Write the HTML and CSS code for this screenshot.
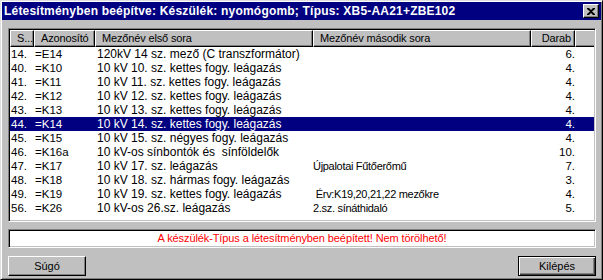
FILE: index.html
```html
<!DOCTYPE html>
<html lang="hu">
<head>
    <meta charset="UTF-8">
    <title>Létesítményben beépítve</title>
    <link rel="stylesheet" href="styles.css">
</head>
<body>

    <div class="window">
        <div class="titlebar">
            <span class="title">Létesítményben beépítve: Készülék: nyomógomb; Típus: XB5-AA21+ZBE102</span>
            <span class="close-btn">
                <svg width="8" height="7" viewBox="0 0 8 7"><path d="M0 0h2l2 2 2-2h2v1L5 3.5 8 6v1H6L4 5 2 7H0V6l3-2.5L0 1z" fill="#000"/></svg>
            </span>
        </div>

        <div class="content">
            <div class="listview">
                <div class="row head">
                    <div class="hcell">S...</div>
                    <div class="hcell">Azonosító</div>
                    <div class="hcell">Mezőnév első sora</div>
                    <div class="hcell">Mezőnév második sora</div>
                    <div class="hcell num">Darab</div>
                    <div class="hcell blank"></div>
                </div>
                <div id="rows"></div>
            </div>

            <div class="status">A készülék-Típus a létesítményben beépített! Nem törölhető!</div>

            <div class="buttons">
                <div class="btn">Súgó</div>
                <div class="btn default">Kilépés</div>
            </div>
        </div>
    </div>

    <script>
        // Sorok adatai
        const data = [
            ['14.', '=E14', '120kV 14 sz. mező (C transzformátor)', '', '6.'],
            ['40.', '=K10', '10 kV 10. sz. kettes fogy. leágazás', '', '4.'],
            ['41.', '=K11', '10 kV 11. sz. kettes fogy. leágazás', '', '4.'],
            ['42.', '=K12', '10 kV 12. sz. kettes fogy. leágazás', '', '4.'],
            ['43.', '=K13', '10 kV 13. sz. kettes fogy. leágazás', '', '4.'],
            ['44.', '=K14', '10 kV 14. sz. kettes fogy. leágazás', '', '4.'],
            ['45.', '=K15', '10 kV 15. sz. négyes fogy. leágazás', '', '4.'],
            ['46.', '=K16a', '10 kV-os sínbontók és  sínföldelők', '', '10.'],
            ['47.', '=K17', '10 kV 17. sz. leágazás', 'Újpalotai Fűtőerőmű', '7.'],
            ['48.', '=K18', '10 kV 18. sz. hármas fogy. leágazás', '', '3.'],
            ['49.', '=K19', '10 kV 19. sz. kettes fogy. leágazás', ' Érv:K19,20,21,22 mezőkre', '4.'],
            ['56.', '=K26', '10 kV-os 26.sz. leágazás', '2.sz. sínáthidaló', '5.']
        ];

        const rows = document.getElementById('rows');
        data.forEach((item, i) => {
            const row = document.createElement('div');
            row.classList.add('row');
            if (i === 5) row.classList.add('selected');
            row.innerHTML = item.map((v, j) =>
                `<div class="cell c${j + 1}">${v}</div>`
            ).join('');
            rows.appendChild(row);
        });
    </script>

</body>
</html>
```

FILE: styles.css
```css
body {
    margin: 0;
    padding: 0;
    font-family: "Liberation Sans", Arial, sans-serif;
    font-size: 11px;
    color: #000;
}

.window {
    width: 603px;
    height: 280px;
    box-sizing: border-box;
    background-color: #c0c0c0;
    border: 1px solid;
    border-color: #dfdfdf #000 #000 #dfdfdf;
    box-shadow: inset 1px 1px 0 #fff, inset -1px -1px 0 #808080;
    padding: 1px;
    display: flex;
    flex-direction: column;
}

.titlebar {
    height: 18px;
    background-color: #000080;
    color: #fff;
    display: flex;
    align-items: center;
    justify-content: space-between;
    padding: 0 2px 0 2px;
}

.title {
    font-weight: bold;
    font-size: 12px;
    letter-spacing: 0.2px;
    white-space: pre;
}

.close-btn {
    width: 16px;
    height: 14px;
    box-sizing: border-box;
    background-color: #c0c0c0;
    border: 1px solid;
    border-color: #fff #000 #000 #fff;
    box-shadow: inset -1px -1px 0 #808080;
    display: flex;
    align-items: center;
    justify-content: center;
}

.content {
    padding: 8px 5px 0 6px;
}

.listview {
    height: 194px;
    box-sizing: border-box;
    background-color: #fff;
    border: 1px solid;
    border-color: #808080 #fff #fff #808080;
    box-shadow: inset 1px 1px 0 #000, inset -1px -1px 0 #c0c0c0;
    padding: 1px;
}

.row {
    display: grid;
    grid-template-columns: 24px 61px 218px 218px 44px;
    height: 14px;
    line-height: 14px;
    white-space: pre;
}

.row.head {
    grid-template-columns: 24px 61px 218px 218px 44px 1fr;
    height: 17px;
    line-height: 15px;
}

.hcell {
    background-color: #c0c0c0;
    border: 1px solid;
    border-color: #fff #000 #000 #fff;
    box-shadow: inset -1px -1px 0 #808080;
    padding-left: 6px;
    letter-spacing: -0.15px;
    overflow: hidden;
}

.hcell.num {
    text-align: right;
    padding-right: 3px;
}

.hcell.blank {
    border-right: none;
    box-shadow: inset 0 -1px 0 #808080;
}

.cell {
    padding-left: 1px;
    font-size: 12px;
    overflow: hidden;
}

.cell.c1,
.cell.c2 {
    font-size: 11.5px;
}

.cell.c3 {
    padding-left: 2px;
}

.cell.c4 {
    font-size: 11px;
    letter-spacing: -0.3px;
    padding-left: 0;
}

.cell.c5 {
    font-size: 11.5px;
    text-align: right;
    padding-right: 0;
}

.row.selected {
    background-color: #000080;
    color: #fff;
}

.status {
    margin-top: 7px;
    height: 19px;
    box-sizing: border-box;
    background-color: #fff;
    border: 1px solid;
    border-color: #808080 #fff #fff #808080;
    box-shadow: inset 1px 1px 0 #000, inset -1px -1px 0 #c0c0c0;
    color: #ff0000;
    text-align: center;
    letter-spacing: -0.1px;
    line-height: 17px;
}

.buttons {
    margin-top: 8px;
    display: flex;
    justify-content: space-between;
}

.btn {
    width: 78px;
    height: 20px;
    box-sizing: border-box;
    background-color: #c0c0c0;
    border: 1px solid;
    border-color: #fff #000 #000 #fff;
    box-shadow: inset -1px -1px 0 #808080;
    text-align: center;
    line-height: 18px;
}

.btn.default {
    border-color: #000;
    box-shadow: inset 1px 1px 0 #fff, inset -1px -1px 0 #404040, inset -2px -2px 0 #808080;
}
```
